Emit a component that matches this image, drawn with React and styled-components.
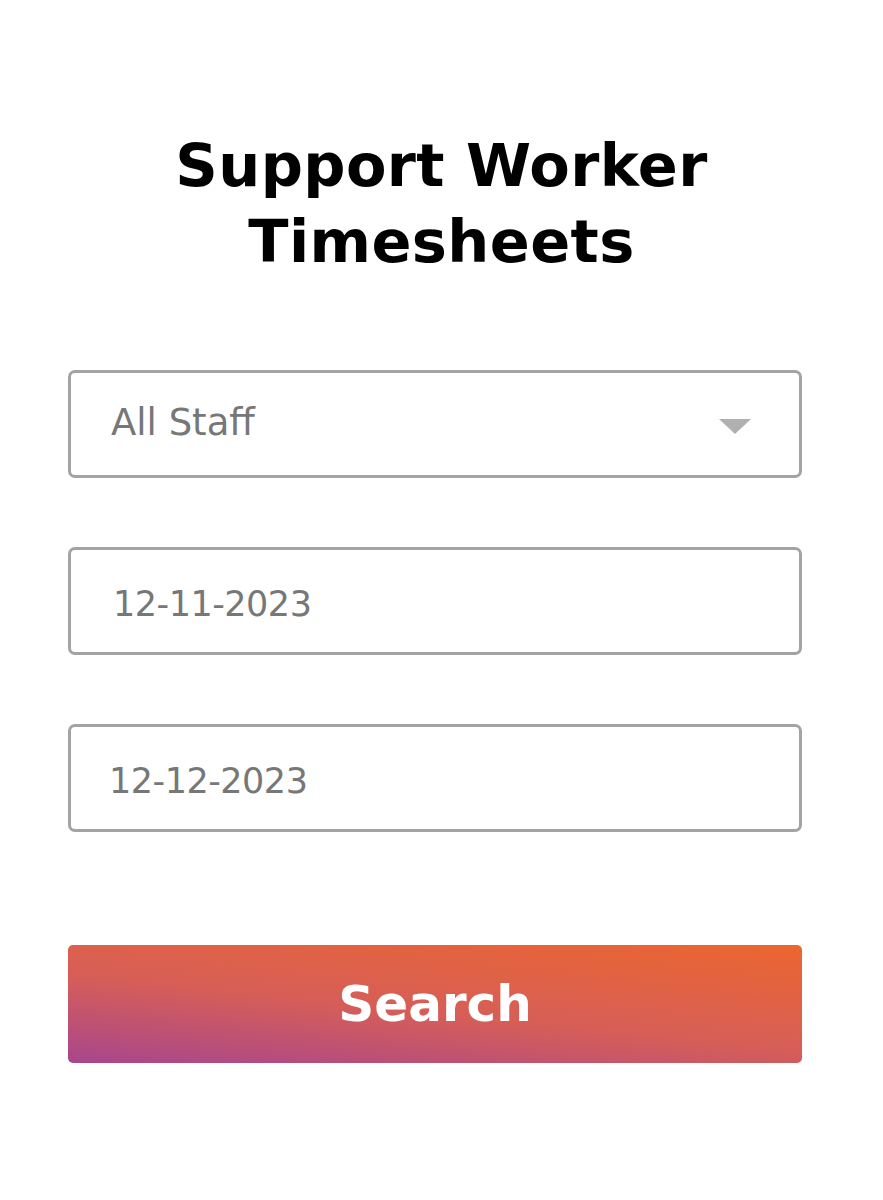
import React from 'react';
import styled, { createGlobalStyle } from 'styled-components';

const Global = createGlobalStyle`
  body {
    margin: 0;
    background: #fff;
    font-family: "DejaVu Sans", "Noto Sans", sans-serif;
  }
`;

const Page = styled.div`
  width: 883px;
  padding-top: 128px;
  box-sizing: border-box;
  display: flex;
  flex-direction: column;
`;

const Title = styled.h1`
  margin: 0 0 90px;
  text-align: center;
  font-size: 59px;
  line-height: 76px;
  font-weight: 700;
  color: #000;
  letter-spacing: 0.4px;
`;

const Form = styled.form`
  margin: 0 81px 0 68px;
  display: flex;
  flex-direction: column;
  gap: 69px;
`;

const Field = styled.div`
  height: 108px;
  box-sizing: border-box;
  border: 3px solid #a3a3a3;
  border-radius: 7px;
  display: flex;
  align-items: center;
  justify-content: space-between;
  padding: ${(p) => p.$drop || 0}px 48px ${(p) => p.$lift || 0}px ${(p) => p.$indent || 40}px;
  font-size: 37px;
  color: #777;
`;

const DateText = styled.span`
  font-size: 35px;
  letter-spacing: -0.5px;
`;

const Caret = styled.span`
  width: 0;
  height: 0;
  border-left: 16px solid transparent;
  border-right: 16px solid transparent;
  border-top: 15px solid #b0b0b0;
  margin-top: 8px;
`;

const Button = styled.button`
  margin-top: 44px;
  height: 118px;
  border: 0;
  border-radius: 5px;
  background: linear-gradient(186deg, #ec6630 0%, #d65e58 55%, #a8468c 100%);
  color: #fff;
  font-family: inherit;
  font-size: 50px;
  font-weight: 700;
  padding: 0;
  cursor: pointer;
`;

export default function App() {
  return (
    <>
      <Global />
      <Page>
        <Title>
          Support Worker
          <br />
          Timesheets
        </Title>
        <Form onSubmit={(e) => e.preventDefault()}>
          <Field $lift={4}>
            <span>All Staff</span>
            <Caret />
          </Field>
          <Field $indent={42} $drop={6}>
            <DateText>12-11-2023</DateText>
          </Field>
          <Field $indent={38} $drop={6}>
            <DateText>12-12-2023</DateText>
          </Field>
          <Button type="submit">Search</Button>
        </Form>
      </Page>
    </>
  );
}
